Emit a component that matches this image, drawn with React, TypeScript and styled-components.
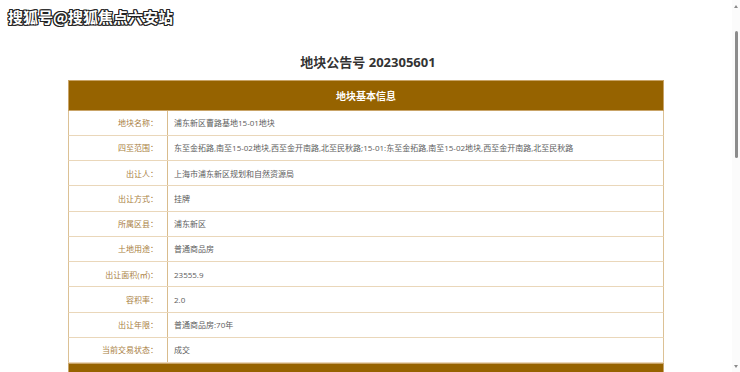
import React from 'react';
import styled, { createGlobalStyle } from 'styled-components';

const GlobalStyle = createGlobalStyle`
    html, body {
        margin: 0;
        padding: 0;
        height: 372px;
        overflow: hidden;
        background: #ffffff;
        font-family: "Open Sans", "Noto Sans CJK SC", sans-serif;
    }
`;

const Screen = styled.div`
    position: relative;
    display: flex;
    width: 740px;
    height: 372px;
    overflow: hidden;
`;

const Page = styled.div`
    width: 732px;
    display: flex;
    flex-direction: column;
`;

const TopBar = styled.div`
    height: 4px;
    margin-top: 2px;
    background: #966300;
`;

const Content = styled.div`
    padding: 0 68px;
    display: flex;
    flex-direction: column;
`;

const Breadcrumb = styled.div`
    margin-top: 13px;
    height: 10px;
    font-size: 6px;
    line-height: 10px;
    color: #888888;
`;

const Title = styled.h1`
    margin: 19px 0 0 0;
    height: 36px;
    font-size: 13px;
    line-height: 36px;
    font-weight: 700;
    color: #333333;
    text-align: center;
    padding-left: 4px;
`;

const Table = styled.div`
    width: 596px;
    display: flex;
    flex-direction: column;
`;

const SectionHead = styled.div`
    height: 30.5px;
    flex-shrink: 0;
    background: #966300;
    color: #ffffff;
    font-size: 10px;
    font-weight: 700;
    display: flex;
    align-items: center;
    justify-content: center;
    border: 1px solid #c9a468;
    box-sizing: border-box;
`;

const Row = styled.div`
    display: grid;
    grid-template-columns: 99px 1fr;
    height: 25.25px;
    box-sizing: border-box;
    border-left: 1px solid #dcc195;
    border-right: 1px solid #dcc195;
    border-bottom: 1px solid #ead7ba;
`;

const Label = styled.div`
    border-right: 1px solid #d9bc8d;
    display: flex;
    align-items: center;
    justify-content: flex-end;
    padding-right: 9px;
    font-size: 8px;
    color: #a9803f;
    white-space: nowrap;
`;

const Value = styled.div`
    display: flex;
    align-items: center;
    padding-left: 6px;
    font-size: 8px;
    color: #5c5c5c;
    white-space: nowrap;
`;

const Watermark = styled.div`
    position: absolute;
    left: 8px;
    top: 6px;
    font-family: "Noto Sans CJK SC", sans-serif;
    font-size: 15px;
    font-weight: 700;
    color: #ffffff;
    text-shadow: 1px 0 0 #222, -1px 0 0 #222, 0 1px 0 #222, 0 -1px 0 #222,
        1px 1px 0 #222, -1px -1px 0 #222, 1px -1px 0 #222, -1px 1px 0 #222;
`;

const ScrollTrack = styled.div`
    width: 8px;
    background: #fbfbfb;
    display: flex;
    flex-direction: column;
    align-items: center;
`;

const Arrow = styled.div<{ down?: boolean }>`
    width: 0;
    height: 0;
    margin: ${(p) => (p.down ? 'auto 0 4px 0' : '5px 0 0 0')};
    border-left: 2.5px solid transparent;
    border-right: 2.5px solid transparent;
    ${(p) =>
        p.down
            ? 'border-top: 3px solid #8a8a8a;'
            : 'border-bottom: 3px solid #8a8a8a;'}
`;

const Thumb = styled.div`
    width: 3px;
    height: 127px;
    margin-top: 23px;
    border-radius: 2px;
    background: #8c8c8c;
`;

const rows: [string, string][] = [
    ['地块名称：', '浦东新区曹路基地15-01地块'],
    [
        '四至范围：',
        '东至金拓路,南至15-02地块,西至金开南路,北至民秋路;15-01:东至金拓路,南至15-02地块,西至金开南路,北至民秋路',
    ],
    ['出让人：', '上海市浦东新区规划和自然资源局'],
    ['出让方式：', '挂牌'],
    ['所属区县：', '浦东新区'],
    ['土地用途：', '普通商品房'],
    ['出让面积(㎡)：', '23555.9'],
    ['容积率：', '2.0'],
    ['出让年限：', '普通商品房:70年'],
    ['当前交易状态：', '成交'],
];

const App: React.FC = () => {
    return (
        <Screen>
            <GlobalStyle />
            <Page>
                <TopBar />
                <Content>
                    <Breadcrumb>当前位置： 地块信息</Breadcrumb>
                    <Title>地块公告号 202305601</Title>
                    <Table>
                        <SectionHead>地块基本信息</SectionHead>
                        {rows.map(([label, value]) => (
                            <Row key={label}>
                                <Label>{label}</Label>
                                <Value>{value}</Value>
                            </Row>
                        ))}
                        <SectionHead />
                    </Table>
                </Content>
            </Page>
            <ScrollTrack>
                <Arrow />
                <Thumb />
                <Arrow down />
            </ScrollTrack>
            <Watermark>搜狐号@搜狐焦点六安站</Watermark>
        </Screen>
    );
};

export default App;
